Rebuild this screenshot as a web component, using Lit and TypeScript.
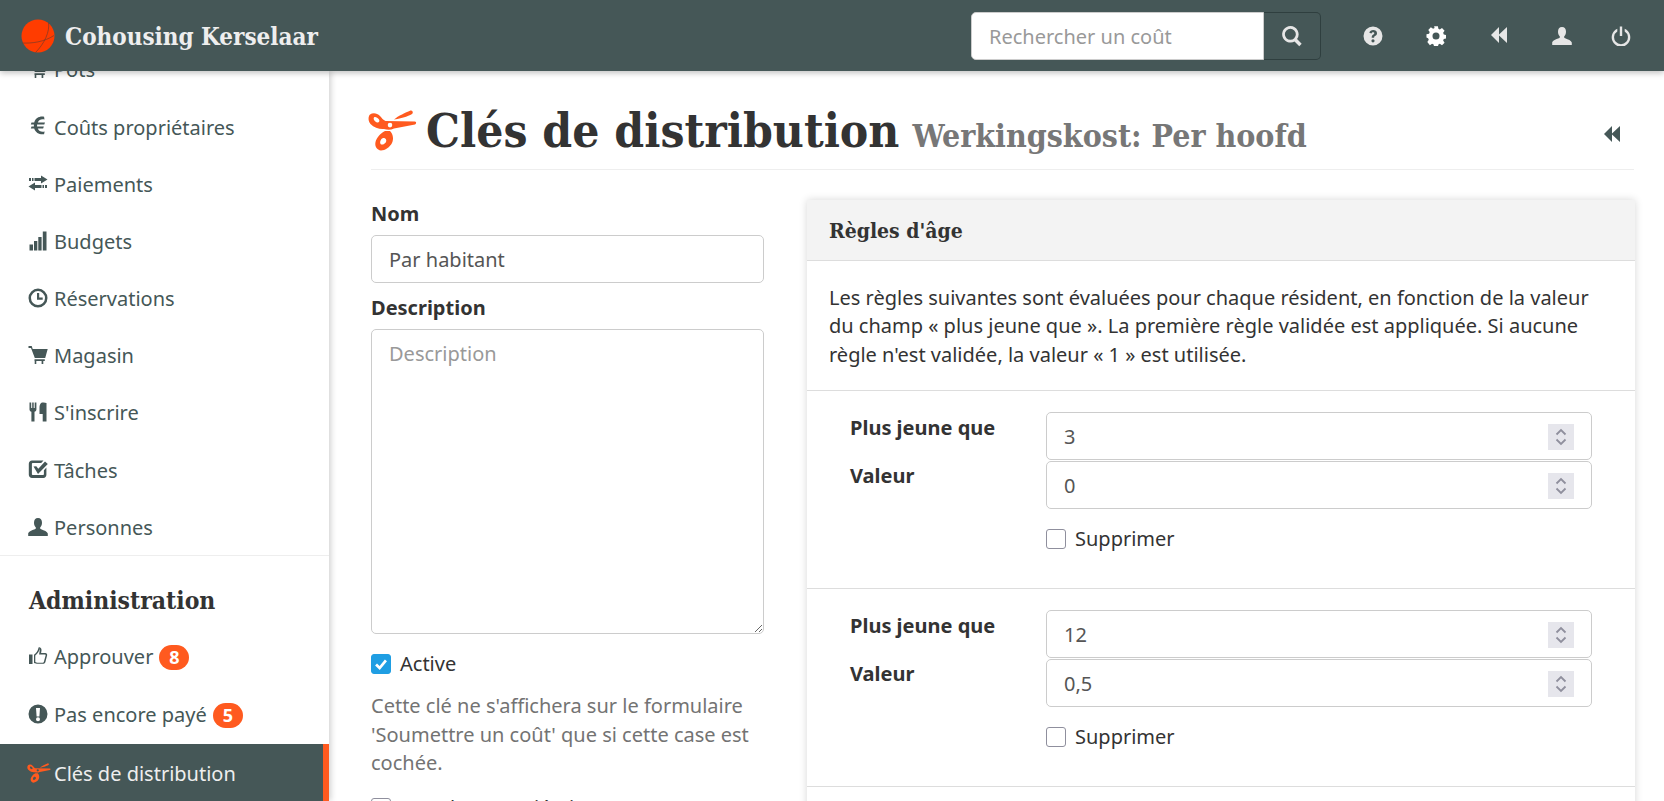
import { LitElement, html, css, svg } from "lit";
import { customElement } from "lit/decorators.js";

const G = (d: any, vb = "0 0 20 20") => html`<svg class="ic" viewBox=${vb} fill="currentColor">${d}</svg>`;

const icons: Record<string, any> = {
  euro: G(svg`<path d="M14.800 2.200c-3.700-.8-7.500 1-8.600 5H3.800l-.6 1.700h2.700v1.800H3.800l-.6 1.700h3c1.200 4 5 5.600 8.600 5l.5-2.400c-2.700.7-5-.2-6-2.600h4.700l.6-1.700H8.700v-1.800h6.300l.6-1.700H9.300c1-2.400 3.200-3.200 5.900-2.600z"/>`, "2.500 1.500 14 17.500"),
  transfer: G(svg`<path d="M13 2.500l6.500 4-6.500 4V8H6.500V5H13zM1 5h2v3H1zM4 5h1.500v3H4zM7 9.500V12h6.500v3H7v2.500l-6.500-4zM14.500 12H16v3h-1.500zM17 12h2v3h-2z"/>`),
  signal: G(svg`<path d="M1.500 13.500H5v6H1.500zM6 10h3.300v9.500H6zM10.300 6h3.300v13.500h-3.300zM14.800.5h3.700v19h-3.700z"/>`),
  clock: G(svg`<path fill-rule="evenodd" d="M10 .6a9.500 9.500 0 1 1 0 19 9.500 9.500 0 0 1 0-19zm0 2.500a7 7 0 1 0 0 14 7 7 0 0 0 0-14zM9 5h2.200v4.600h3.500v2.200H9z"/>`),
  cart: G(svg`<path d="M.5 1h3.200l1 3h15l-2.500 9H6.800L3 3H.5zM6.500 14.300h10.300V16h-1.500v3h-1.700v-3H8.300v3H6.700v-3h-.2z"/>`),
  cutlery: G(svg`<path d="M1.500.5h1.700v5.500h1V.5h1.500v5.500h1V.5h1.700v7c0 1.200-.9 2-1.900 2.300v9.700H3.400V9.800C2.300 9.500 1.500 8.700 1.500 7.500zM14 .5c2.200 0 4.500.5 4.500.5v18.500h-3.800V12H11.500V5c0-2 1.300-4.500 2.500-4.500z"/>`),
  check: G(svg`<path fill-rule="evenodd" d="M4 1.500h11.500l-2.300 2.500H4.700c-.5 0-.8.3-.8.8v10.400c0 .5.3.8.8.8h10.400c.5 0 .8-.3.8-.8v-4l2.500-2.600v7.100c0 1.800-1.300 3.300-3 3.300H4c-1.800 0-3.200-1.500-3.200-3.300V4.800C.8 3 2.200 1.500 4 1.500zM5.500 7.500l2.800-.2 2 2.500L17 2.500 19.800 5 10 15z"/>`),
  user: G(svg`<path d="M10 1c2.600 0 4 2 4 4.700 0 2-.8 3.600-1.800 4.800-.4.8.2 1.400 1 1.800 3 1.200 6 2.300 6.600 4.200v2.500H.2V16.300c.6-1.900 3.600-3 6.600-4 .8-.4 1.400-1 1-1.800C6.800 9.300 6 7.700 6 5.700 6 3 7.400 1 10 1z"/>`),
  thumb: G(svg`<path fill-rule="evenodd" d="M1 8.500h3.500V18H1zM11.500 1.200c1.600.3 2.200 1.700 2 3.300l-.4 2.500h4.200c1.300 0 2.200 1.200 1.800 2.500l-1.700 6.500c-.3 1.100-1.100 1.800-2.200 1.800H8.800L6 17V8.800c2-1.500 3.900-4 4.300-6.400.1-.8.500-1.300 1.200-1.200zm.2 1.600c-.6 3-2.600 5.500-4.400 6.800v6.300l1.800.9h5.700c.5 0 .9-.3 1-.8l1.800-6.600c.1-.5-.2-.9-.7-.9h-5.800l.6-4c.2-1-.2-1.600-.6-1.700z"/>`),
  alert: G(svg`<path fill-rule="evenodd" d="M10 .5a9.500 9.500 0 1 1 0 19 9.500 9.500 0 0 1 0-19zM8 4l.6 8.500h2.800L12 4zM10 13.300a2 2 0 1 0 0 4 2 2 0 0 0 0-4z"/>`),
  scissors: G(svg`<path fill-rule="evenodd" d="M2 4.500C5 2.500 9 3 12 6c2 2 3 4 5.500 5L47 11.500c1.500 0 1.500 2.500 0 3L26 18.500c-3 1.500-6.500 1.500-10 .5-4 .5-10-1-13.500-5C0 11 0 6.500 2 4.500zM6 7.500c-1 1.500.5 4 3 5 2 .5 3-1.500 2-3-1.500-2-4-3-5-2zM22 12.800a2.300 2.300 0 1 0 0 4.600 2.300 2.300 0 0 0 0-4.600zM17 21h5c3 3 4 8 2 12s-7 7.500-11 7.500c-4-.5-6.500-4-5.500-8.500 1-4 4.500-8.500 9.500-11zM15 28c-2.500 1-3.500 4-2.500 6 1.500 1.500 4.500 0 5.500-2s-.5-4.500-3-4zM26 9.500c4-3.500 12-7 16-8.700 2-.8 3.500 1.200 2.500 2.700-1.500 1.500-9.500 5-18.500 6z"/>`, "0 0 49 41"),
  search: G(svg`<path fill-rule="evenodd" d="M8.500 1a7.500 7.500 0 0 1 6.100 11.800l4.200 4.300-2.200 2.200-4.300-4.300A7.500 7.500 0 1 1 8.500 1zm0 2.500a5 5 0 1 0 0 10 5 5 0 0 0 0-10z"/>`),
  help: G(svg`<path fill-rule="evenodd" d="M10 .5a9.500 9.500 0 1 1 0 19 9.500 9.500 0 0 1 0-19zM6.300 6.800l2.200.8c.3-.9.800-1.400 1.500-1.400.8 0 1.300.4 1.300 1 0 .7-.6 1.100-1.300 1.600-1 .7-1.300 1.500-1.300 3h2.400c0-.9.200-1.200 1-1.700 1.100-.7 1.900-1.500 1.900-2.900 0-2-1.700-3.200-3.800-3.200-1.900 0-3.300.9-3.900 2.800zM10 13.200a1.600 1.600 0 1 0 0 3.200 1.600 1.600 0 0 0 0-3.200z"/>`),
  cog: G(svg`<path fill-rule="evenodd" d="M8 .3h4l.5 2.700 1.500.7 2.300-1.500 2.700 2.800-1.500 2.200.7 1.700 2.600.5v3.600l-2.600.6-.7 1.600 1.500 2.300-2.700 2.700-2.300-1.500-1.500.6-.5 2.700H8l-.5-2.700-1.600-.6-2.300 1.500L.9 16.700l1.500-2.300-.7-1.600L0 12.200V8.600l2.700-.5.7-1.700-1.500-2.200 2.700-2.800 2.300 1.500 1.600-.7zM10 6.700a3.700 3.700 0 1 0 0 7.400 3.700 3.700 0 0 0 0-7.400z"/>`, "0 0 20 21"),
  back: G(svg`<path d="M9 2v7.500L17 2v16l-8-7.500V18L1 10z"/>`),
  power: G(svg`<path d="M8.800 .5h2.400v9.500H8.800zM6.300 2.800v2.700a6.900 6.900 0 1 0 7.400 0V2.800a9.300 9.300 0 1 1-7.400 0z"/>`),
};

const spin = html`<svg class="spin" viewBox="0 0 26 26" aria-hidden="true"><rect width="26" height="26" fill="#e6e6ec"/><path d="M8.500 10.500 13 6l4.500 4.500M8.500 15.500 13 20l4.500-4.500" fill="none" stroke="#8f8f9d" stroke-width="1.800"/></svg>`;

const MENU: [string, string][] = [
  ["cart", "Pots"],
  ["euro", "Coûts propriétaires"],
  ["transfer", "Paiements"],
  ["signal", "Budgets"],
  ["clock", "Réservations"],
  ["cart", "Magasin"],
  ["cutlery", "S'inscrire"],
  ["check", "Tâches"],
  ["user", "Personnes"],
];

const RULES = [
  ["3", "0"],
  ["12", "0,5"],
];

@customElement("app-root")
export class AppRoot extends LitElement {
  static styles = css`
    :host {
      display: block;
      height: 801px;
      overflow: hidden;
      font-family: "Noto Sans", sans-serif;
      font-size: 20px;
      line-height: 28.57px;
      color: #333;
      background: #fff;
    }
    * { box-sizing: border-box; }
    .ic { width: 20px; height: 20px; display: block; flex: none; }
    .slab { font-family: "DejaVu Serif Condensed", "DejaVu Serif", serif; font-weight: 700; }

    header {
      position: relative;
      z-index: 2;
      height: 71px;
      background: #455757;
      box-shadow: 0 2px 6px rgba(0,0,0,.25);
      display: flex;
      align-items: center;
      padding-left: 21px;
      color: #e6e6e6;
    }
    .logo { width: 34px; height: 34px; flex: none; margin: 1px 10px 0 0; }
    .brand { font-size: 24px; color: #eee; padding-top: 3px; }
    .search { display: flex; margin: 1px 0 0 auto; height: 48px; }
    .search input {
      width: 293px;
      border: 1px solid #ccc;
      border-radius: 5px 0 0 5px;
      padding: 2px 17px 0;
      font: inherit;
      background: #fff;
      outline: none;
    }
    .search input::placeholder, textarea::placeholder { color: #999; opacity: 1; }
    .search button {
      width: 57px;
      background: #455757;
      border: 1px solid #2f3f3f;
      border-left: 0;
      border-radius: 0 5px 5px 0;
      color: #e6e6e6;
      display: flex;
      align-items: center;
      justify-content: center;
      padding: 0;
    }
    .search button .ic { width: 22px; height: 22px; }
    .tools { display: flex; align-items: center; gap: 40px; margin: 0 33px 0 42px; }
    .tools .cog { color: #fff; margin-left: 3px; }
    .tools .bk { margin-left: 4px; width: 22px; height: 22px; }
    .tools .pw { margin-left: -1px; }
    .tools span { display: block; }

    .body { display: flex; height: 730px; }
    aside {
      width: 329px;
      flex: none;
      overflow: hidden;
      box-shadow: 2px 0 6px rgba(0,0,0,.18);
      position: relative;
      z-index: 1;
      background: #fff;
    }
    .list { margin: -29px 0 -2px; }
    .item {
      height: 57.200px;
      display: flex;
      align-items: center;
      gap: 6px;
      padding-left: 28px;
      color: #455757;
    }
    .item .ic { margin-bottom: 3px; }
    .sep { border-top: 1px solid #eee; }
    .admin { font-size: 24.500px; color: #333; padding: 27px 0 10px 29px; line-height: 36px; }
    .badge {
      background: #ff5a1f;
      color: #fff;
      font-weight: 700;
      font-size: 18px;
      line-height: 25px;
      border-radius: 13px;
      min-width: 30px;
      text-align: center;
    }
    .item.pay { margin-top: 1px; }
    .item.active {
      background: #455757;
      color: #eee;
      border-right: 6px solid #ff5a1f;
      height: 58px;
      padding-top: 2px;
    }
    .item.active .ic { color: #ff5a1f; width: 24px; margin-left: -1px; margin-right: -3px; }

    main { flex: 1; min-width: 0; overflow: hidden; padding: 0 29px 0 42px; }
    .title {
      display: flex;
      align-items: center;
      height: 99px;
      padding-top: 25px;
      border-bottom: 1px solid #eee;
      margin-right: 1px;
    }
    .title .big { width: 49px; height: 41px; color: #ff5a1f; margin: -5px 9px 0 -3px; flex: none; }
    .title .big .ic { width: 100%; height: 100%; }
    h1 { margin: 0; font-size: 47.500px; line-height: 60px; color: #333; white-space: nowrap; }
    small { font-size: 31.800px; color: #777; margin-left: 13px; }
    .title a { margin: 2px 11px 0 auto; color: #455757; }
    .grid { display: grid; grid-template-columns: 393px 1fr; gap: 43px; padding-top: 29px; }
    label.h { display: block; font-weight: 700; color: #333; line-height: 28.570px; }
    .form label.h { margin-top: 1px; margin-bottom: 6px; }
    .fld {
      width: 100%;
      height: 48px;
      border: 1px solid #ccc;
      border-radius: 5px;
      padding: 2px 17px 0;
      font: inherit;
      color: #555;
      background: #fff;
      outline: none;
      display: block;
    }
    textarea.fld { height: 305px; padding: 10px 17px; resize: both; }
    .form label.h.next { margin-top: 11.500px; }
    .chk.next { margin-top: 16px; }
    .chk { display: flex; align-items: center; gap: 9px; color: #333; }
    .chk input {
      appearance: none;
      width: 20px;
      height: 20px;
      margin: 0;
      flex: none;
      background: #fff;
      border: 1px solid #8f8f9d;
      border-radius: 3px;
    }
    .chk input:checked {
      border-color: #1f9ee3;
      background: #1f9ee3 url("data:image/svg+xml,%3Csvg xmlns='http://www.w3.org/2000/svg' viewBox='0 0 20 20'%3E%3Cpath d='M4.500 10.500 8.500 14.500 15.500 6' fill='none' stroke='%23fff' stroke-width='3'/%3E%3C/svg%3E") center / 100% no-repeat;
    }
    .note { margin: 14px 0 16px; color: #737373; }

    .card { box-shadow: 0 0 8px rgba(0,0,0,.16); background: #fff; margin-top: 1px; }
    .card-h {
      height: 61px;
      background: #f3f3f3;
      border-bottom: 1px solid #ddd;
      display: flex;
      align-items: center;
      padding: 2px 0 0 22px;
      font-size: 21px;
      color: #333;
    }
    .card-t { padding: 22.500px 22px 21px; border-bottom: 1px solid #ddd; margin: 0; }
    .rule { padding: 21px 43px 0 43px; height: 198px; border-bottom: 1px solid #ddd; }
    .rule-g { display: grid; grid-template-columns: 196px 1fr; row-gap: 1px; grid-auto-rows: 48px; }
    .rule-g label { padding-top: 1px; }
    .rule-g label:first-child { padding-top: 2px; }
    .num { display: flex; align-items: center; padding-right: 17px; }
    .num input { flex: 1; min-width: 0; border: 0; outline: 0; padding: 0; font: inherit; color: #555; background: none; }
    .spin { width: 26px; height: 26px; flex: none; }
    .del { margin: 16px 0 0 196px; }
  `;

  render() {
    return html`
      <header>
        <svg class="logo" viewBox="0 0 34 34">
          <circle cx="17" cy="17" r="16.500" fill="#ff3c00"/>
          <path d="M1 24c10 .5 22-1 32-7.500M27.500 3.500c1.500 9-4 21-13 30" fill="none" stroke="#7a3a28" stroke-width=".7"/>
        </svg>
        <span class="brand slab">Cohousing Kerselaar</span>
        <div class="search">
          <input placeholder="Rechercher un coût" />
          <button aria-label="Rechercher">${icons.search}</button>
        </div>
        <div class="tools">
          <span>${icons.help}</span>
          <span class="cog">${icons.cog}</span>
          <span class="bk">${icons.back}</span>
          <span class="us">${icons.user}</span>
          <span class="pw">${icons.power}</span>
        </div>
      </header>
      <div class="body">
        <aside>
          <div class="list">
            ${MENU.map(([i, t]) => html`<div class="item">${icons[i]}<span>${t}</span></div>`)}
          </div>
          <div class="sep admin slab">Administration</div>
          <div class="item">${icons.thumb}<span>Approuver</span><span class="badge">8</span></div>
          <div class="item pay">${icons.alert}<span>Pas encore payé</span><span class="badge">5</span></div>
          <div class="item active">${icons.scissors}<span>Clés de distribution</span></div>
        </aside>
        <main>
          <div class="title">
            <span class="big">${icons.scissors}</span>
            <h1 class="slab">Clés de distribution<small class="slab">Werkingskost: Per hoofd</small></h1>
            <a>${icons.back}</a>
          </div>
          <div class="grid">
            <div class="form">
              <label class="h">Nom</label>
              <input class="fld" value="Par habitant" />
              <label class="h next">Description</label>
              <textarea class="fld" placeholder="Description"></textarea>
              <label class="chk next"><input type="checkbox" checked />Active</label>
              <p class="note">Cette clé ne s'affichera sur le formulaire 'Soumettre un coût' que si cette case est cochée.</p>
              <label class="chk"><input type="checkbox" />Pour les propriétaires</label>
            </div>
            <div class="card">
              <div class="card-h slab">Règles d'âge</div>
              <p class="card-t">Les règles suivantes sont évaluées pour chaque résident, en fonction de la valeur du champ « plus jeune que ». La première règle validée est appliquée. Si aucune règle n'est validée, la valeur « 1 » est utilisée.</p>
              ${RULES.map(([a, b]) => html`
                <div class="rule">
                  <div class="rule-g">
                    <label class="h">Plus jeune que</label>
                    <div class="fld num"><input value=${a} />${spin}</div>
                    <label class="h">Valeur</label>
                    <div class="fld num"><input value=${b} />${spin}</div>
                  </div>
                  <label class="chk del"><input type="checkbox" />Supprimer</label>
                </div>`)}
            </div>
          </div>
        </main>
      </div>
    `;
  }
}
